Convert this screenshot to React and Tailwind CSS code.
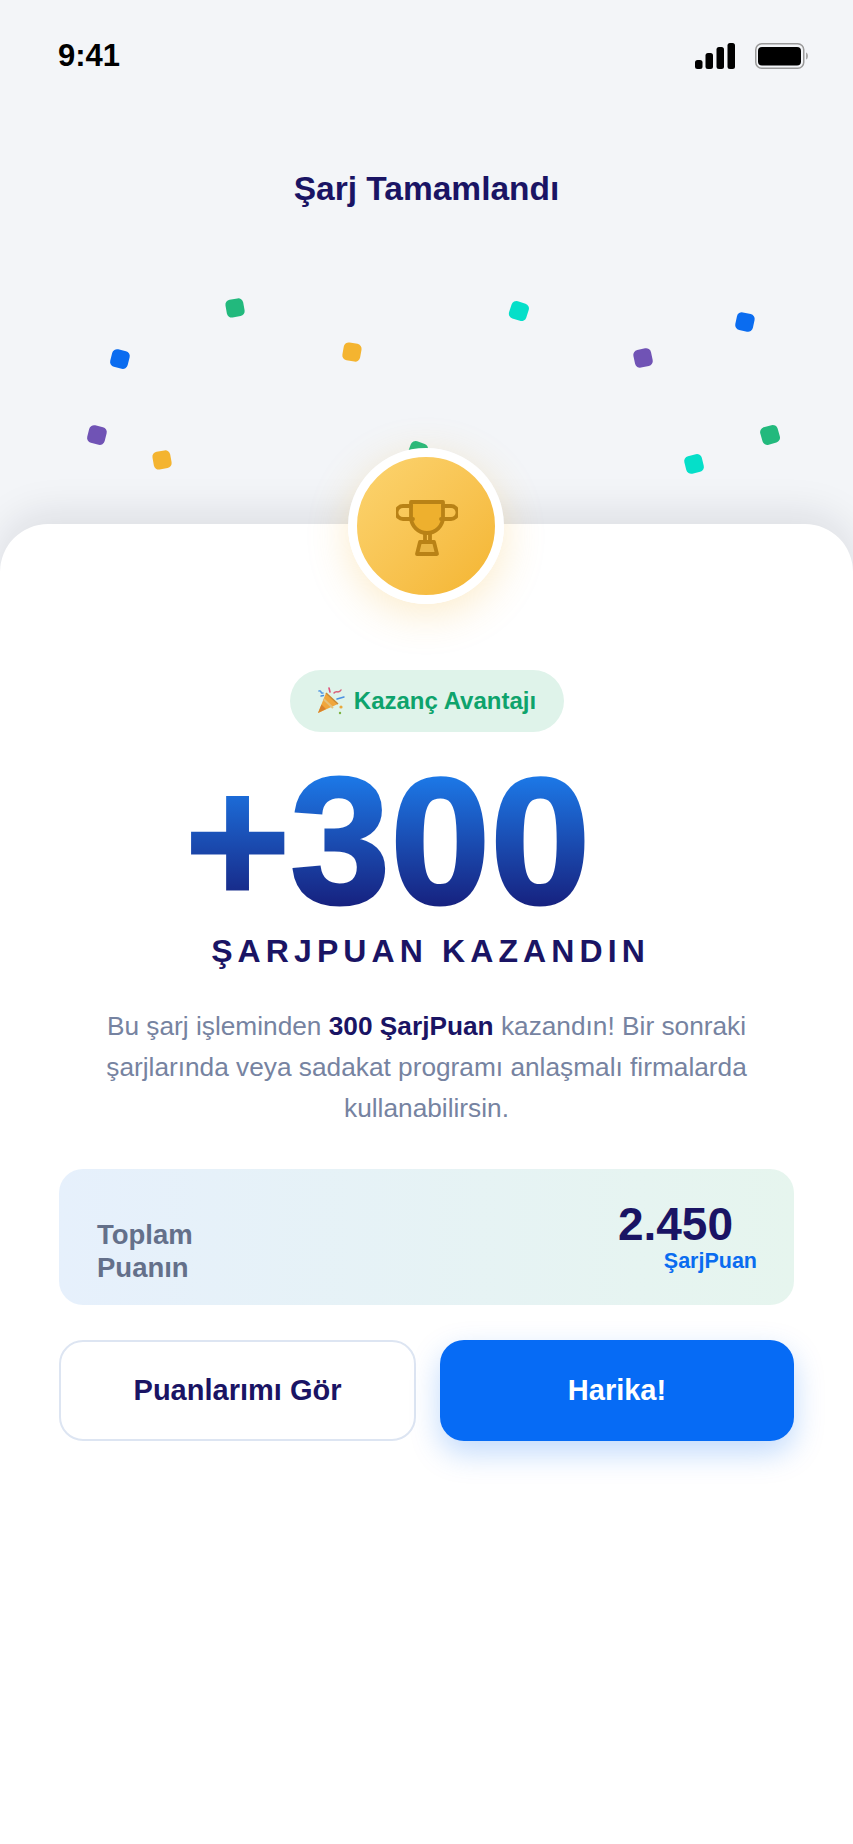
import React from 'react'

const confetti = [
  { left: 'left-[111px] top-[350px] rotate-[14deg]', color: 'bg-[#0a6cf0]' },
  { left: 'left-[226px] top-[299px] rotate-[-10deg]', color: 'bg-[#22b97d]' },
  { left: 'left-[343px] top-[343px] rotate-[10deg]', color: 'bg-[#f4b430]' },
  { left: 'left-[510px] top-[302px] rotate-[18deg]', color: 'bg-[#05dfc9]' },
  { left: 'left-[634px] top-[349px] rotate-[-12deg]', color: 'bg-[#7053b5]' },
  { left: 'left-[736px] top-[313px] rotate-[12deg]', color: 'bg-[#0a6cf0]' },
  { left: 'left-[88px] top-[426px] rotate-[14deg]', color: 'bg-[#7053b5]' },
  { left: 'left-[153px] top-[451px] rotate-[-10deg]', color: 'bg-[#f4b430]' },
  { left: 'left-[409px] top-[442px] rotate-[20deg]', color: 'bg-[#22b97d]' },
  { left: 'left-[685px] top-[455px] rotate-[-14deg]', color: 'bg-[#05dfc9]' },
  { left: 'left-[761px] top-[426px] rotate-[-16deg]', color: 'bg-[#22b97d]' },
]

const Signal = () => (
  <svg width="40" height="26" viewBox="0 0 40 26" fill="#000">
    <rect x="0" y="17" width="7.5" height="9" rx="2.5" />
    <rect x="10.5" y="10" width="7.5" height="16" rx="2.5" />
    <rect x="21.5" y="4" width="7.5" height="22" rx="2.5" />
    <rect x="32.5" y="0" width="7.5" height="26" rx="2.5" />
  </svg>
)

const Battery = () => (
  <svg width="53" height="26" viewBox="0 0 53 26">
    <rect x="0.75" y="0.75" width="48" height="24.5" rx="6" fill="none" stroke="#9a9a9a" strokeWidth="1.5" />
    <rect x="3" y="4" width="43" height="18.5" rx="4" fill="#000" />
    <path d="M51 9.5 C52.5 10 53 11.5 53 13 C53 14.5 52.5 16 51 16.5 Z" fill="#a9a9a9" />
  </svg>
)

const Trophy = () => (
  <svg width="62" height="56" viewBox="0 0 62 56" fill="none" stroke="#b98216" strokeWidth="3.8" strokeLinejoin="round" strokeLinecap="round" className="ml-[2px] mt-[3px]">
    <path d="M15 2 H47 V17 A16 16 0 0 1 15 17 Z" fill="#eeb02e" />
    <path d="M15 6 H7 A6.5 6.5 0 0 0 7 19 H17" />
    <path d="M47 6 H55 A6.5 6.5 0 0 1 55 19 H45" />
    <path d="M29 33 V42 M34 33 V42" />
    <path d="M24 42 H38 L41 54 H21 Z" fill="#e9b544" />
  </svg>
)

// no emoji font in the sandbox, so the popper is drawn by hand
const Popper = () => (
  <svg width="28" height="28" viewBox="0 0 28 28" fill="none">
    <path d="M1 26 L9 6 L21 17 Z" fill="#f0a63c" />
    <path d="M1 26 L4.5 17.5 L9 22 Z" fill="#d9822b" />
    <path d="M6.5 12 L16 21" stroke="#e5c07a" strokeWidth="2" />
    <path d="M9 6 L21 17" stroke="#c98a34" strokeWidth="1.5" />
    <path d="M2 4 C5 3 3 7 6 6 M4 9 L6.5 8.5" stroke="#4a90e2" strokeWidth="1.4" strokeLinecap="round" />
    <path d="M12 1 L13 5" stroke="#e0527a" strokeWidth="1.6" strokeLinecap="round" />
    <path d="M17 6 C19 3 22 7 24 3" stroke="#d9607a" strokeWidth="1.5" strokeLinecap="round" />
    <path d="M20 12 L27 10" stroke="#4a90e2" strokeWidth="1.5" strokeLinecap="round" />
    <circle cx="24" cy="20" r="1.6" fill="#e8a93c" />
    <circle cx="23" cy="26" r="1.2" fill="#7cb342" />
  </svg>
)

export default function App() {
  return (
    <div className="relative h-[1844px] w-[853px] overflow-hidden bg-[#f3f5f8] font-['Liberation_Sans',sans-serif]">
      {/* Header */}
      <div className="h-[524px]">
        <div className="flex items-center justify-between pl-[58px] pr-[45px] pt-[43px]">
          <span className="text-[31px] font-bold leading-[26px] text-black">9:41</span>
          <div className="flex items-center gap-[20px]">
            <Signal />
            <Battery />
          </div>
        </div>
        <h1 className="mt-[99px] text-center text-[33.5px] font-bold leading-[42px] text-[#1a1464]">Şarj Tamamlandı</h1>
      </div>

      {confetti.map((c, i) => (
        <div key={i} className={`absolute h-[17.5px] w-[17.5px] rounded-[5px] ${c.left} ${c.color}`} />
      ))}

      {/* Card */}
      <div className="relative h-[1320px] rounded-t-[48px] bg-white pt-[146px] shadow-[0_-10px_40px_rgba(15,23,42,0.1)]">
        <div className="absolute left-[348px] top-[-76px] flex h-[156px] w-[156px] items-center justify-center rounded-full border-[9px] border-white bg-linear-to-br from-[#fcd46f] to-[#f4b52f] shadow-[0_10px_40px_rgba(244,181,47,0.25)]">
          <Trophy />
        </div>

        <div className="flex justify-center">
          <div className="flex h-[62px] w-[274px] items-center justify-center gap-[9px] rounded-full bg-[#dff3ea]">
            <Popper />
            <span className="text-[24px] font-bold text-[#0ea36c]">Kazanç Avantajı</span>
          </div>
        </div>

        <div className="mt-[42px] pl-[185px]">
          <span className="inline-block bg-linear-to-b from-[#1c7ae9] to-[#16207e] bg-clip-text text-[180px] font-bold leading-[134px] text-transparent [-webkit-text-stroke:3px_transparent]">+300</span>
        </div>

        <div className="mt-[21px] pl-[8px] text-center text-[32px] font-bold leading-[40px] tracking-[5.1px] text-[#1a1464]">ŞARJPUAN KAZANDIN</div>

        <p className="mt-[35px] text-center text-[26.25px] leading-[41px] text-[#7683a1]">
          Bu şarj işleminden <b className="text-[#1a1464]">300 ŞarjPuan</b> kazandın! Bir sonraki
          <br />
          şarjlarında veya sadakat programı anlaşmalı firmalarda
          <br />
          kullanabilirsin.
        </p>

        <div className="mx-[59px] mt-[40px] flex h-[136px] items-center justify-between rounded-[24px] bg-linear-to-r from-[#e6f0fc] to-[#e6f5ee] pl-[38px] pr-[37px]">
          <div className="mt-[28px] text-[27.5px] font-bold leading-[33px] text-[#64708a]">
            Toplam
            <br />
            Puanın
          </div>
          <div className="flex flex-col items-end">
            <span className="mr-[24px] text-[46px] font-bold leading-[46px] text-[#1a1464]">2.450</span>
            <span className="mt-[1px] text-[21.5px] font-bold leading-[26px] text-[#0a6cf0]">ŞarjPuan</span>
          </div>
        </div>

        <div className="mx-[59px] mt-[35px] flex gap-[24px]">
          <button className="h-[101px] w-[357px] rounded-[24px] border-2 border-[#dde5f2] bg-white text-[29px] font-bold text-[#1a1464]">Puanlarımı Gör</button>
          <button className="h-[101px] flex-1 rounded-[24px] bg-[#066bf5] text-[29px] font-bold text-white shadow-[0_12px_30px_rgba(6,107,245,0.25)]">Harika!</button>
        </div>
      </div>
    </div>
  )
}
